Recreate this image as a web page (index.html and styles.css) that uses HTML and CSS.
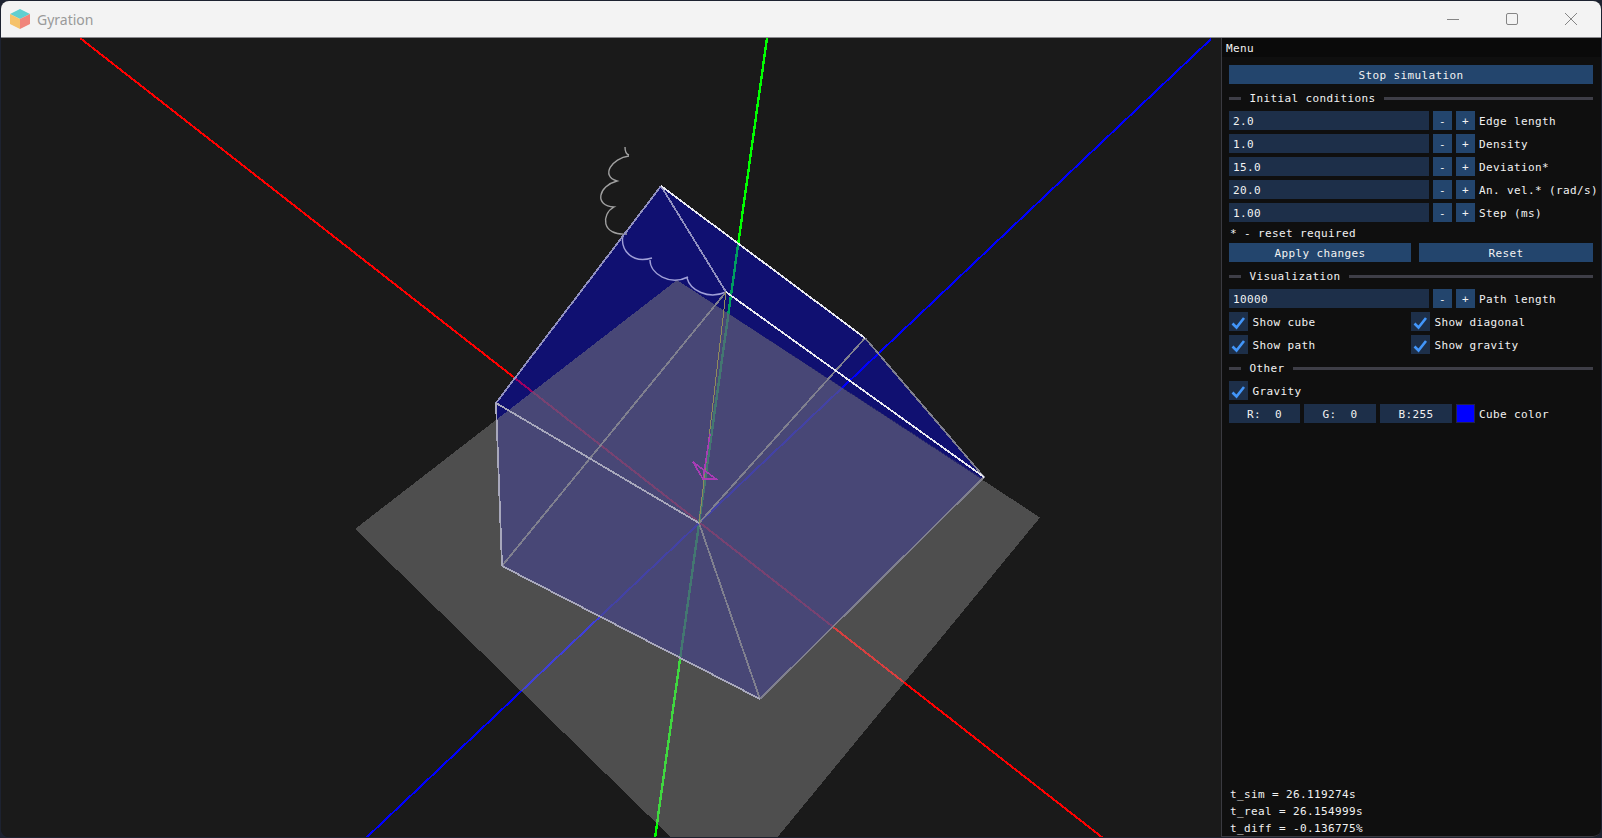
FILE: index.html
```html
<!DOCTYPE html>
<html lang="en">
<head>
<meta charset="utf-8">
<title>Gyration</title>
<link rel="stylesheet" href="styles.css">
</head>
<body>
<div class="window">
  <header class="titlebar">
    <svg class="logo" viewBox="0 0 20 20" width="20" height="20" aria-hidden="true">
      <polygon class="logo-top" points="10,0 20,5 10,10 0,5"/>
      <polygon class="logo-left" points="0,5 10,10 10,20 0,15"/>
      <polygon class="logo-right" points="20,5 10,10 10,20 20,15"/>
    </svg>
    <span class="app-title">Gyration</span>
    <div class="controls">
      <svg class="ctl" viewBox="0 0 14 14" width="14" height="14"><path d="M1 7.5H13"/></svg>
      <svg class="ctl" viewBox="0 0 14 14" width="14" height="14"><rect x="1.5" y="1.5" width="11" height="11" rx="1.5"/></svg>
      <svg class="ctl" viewBox="0 0 14 14" width="14" height="14"><path d="M1 1L13 13M13 1L1 13"/></svg>
    </div>
  </header>
  <div class="main">
    <svg class="scene" width="1220" height="799" viewBox="1 38 1220 799" aria-hidden="true">
      <g class="axes">
        <line class="ax-red" x1="80" y1="38" x2="1103" y2="838"/>
        <line class="ax-green" x1="767" y1="38" x2="655" y2="838"/>
        <line class="ax-blue" x1="1211" y1="39" x2="366" y2="838"/>
      </g>
      <polygon class="cube" points="661,186 865,338 984,477 760,699 502,566 496,403"/>
      <polygon class="floor" points="677,280 1040,517.5 730,895 355,529"/>
      <polygon class="tint" points="677,280 983,479 760,699 502,566 496.5,420"/>
      <path class="trail" d="M625 147Q625 154 629 155M629 156C612 158 600 176 617 181C598 186 594 206 614 207C601 214 601 236 627 234"/>
      <path class="trail inner" d="M623 235C620 250 632 264 652 258M650 260C650 274 670 286 688 277M687 278C690 290 708 300 726 292"/>
      <g class="wire">
        <line class="w-mid" x1="661" y1="186" x2="496" y2="403"/>
        <line class="w-mid" x1="661" y1="186" x2="726" y2="292"/>
        <line class="w-dim" x1="865" y1="338" x2="984" y2="477"/>
        <line class="w-dim" x1="984" y1="477" x2="760" y2="699"/>
        <line class="w-dim" x1="502" y1="566" x2="726" y2="292"/>
        <line class="w-dim" x1="699" y1="523" x2="865" y2="338"/>
        <line class="w-dim" x1="699" y1="523" x2="760" y2="699"/>
        <line class="w-lite" x1="496" y1="403" x2="502" y2="566"/>
        <line class="w-lite" x1="502" y1="566" x2="760" y2="699"/>
        <line class="w-lite" x1="496" y1="403" x2="699" y2="523"/>
        <line class="w-bright" x1="661" y1="186" x2="865" y2="338"/>
        <line class="w-bright" x1="726" y1="292" x2="984" y2="477"/>
      </g>
      <line class="diag" x1="726" y1="292" x2="699" y2="523"/>
      <polyline class="gravity" points="710,434 703,479 716,479 693,462 703,479"/>
    </svg>
    <aside class="panel">
      <div class="menu-title">Menu</div>
      <div class="panel-body">
        <button class="btn wide">Stop simulation</button>
        <div class="sep"><span class="sep-stub"></span><span class="sep-text">Initial conditions</span><span class="sep-line"></span></div>
        <div class="row"><span class="field">2.0</span><span class="btn step">-</span><span class="btn step">+</span><span class="lbl">Edge length</span></div>
        <div class="row"><span class="field">1.0</span><span class="btn step">-</span><span class="btn step">+</span><span class="lbl">Density</span></div>
        <div class="row"><span class="field">15.0</span><span class="btn step">-</span><span class="btn step">+</span><span class="lbl">Deviation*</span></div>
        <div class="row"><span class="field">20.0</span><span class="btn step">-</span><span class="btn step">+</span><span class="lbl">An. vel.* (rad/s)</span></div>
        <div class="row"><span class="field">1.00</span><span class="btn step">-</span><span class="btn step">+</span><span class="lbl">Step (ms)</span></div>
        <div class="note">* - reset required</div>
        <div class="actions"><button class="btn apply">Apply changes</button><button class="btn reset">Reset</button></div>
        <div class="sep"><span class="sep-stub"></span><span class="sep-text">Visualization</span><span class="sep-line"></span></div>
        <div class="row"><span class="field">10000</span><span class="btn step">-</span><span class="btn step">+</span><span class="lbl">Path length</span></div>
        <div class="checks">
          <label class="check"><span class="box"><svg viewBox="0 0 19 19" width="19" height="19"><path d="M3.5 11.5L7.5 15.5L15 6"/></svg></span><span class="lbl">Show cube</span></label>
          <label class="check"><span class="box"><svg viewBox="0 0 19 19" width="19" height="19"><path d="M3.5 11.5L7.5 15.5L15 6"/></svg></span><span class="lbl">Show diagonal</span></label>
          <label class="check"><span class="box"><svg viewBox="0 0 19 19" width="19" height="19"><path d="M3.5 11.5L7.5 15.5L15 6"/></svg></span><span class="lbl">Show path</span></label>
          <label class="check"><span class="box"><svg viewBox="0 0 19 19" width="19" height="19"><path d="M3.5 11.5L7.5 15.5L15 6"/></svg></span><span class="lbl">Show gravity</span></label>
        </div>
        <div class="sep"><span class="sep-stub"></span><span class="sep-text">Other</span><span class="sep-line"></span></div>
        <label class="check"><span class="box"><svg viewBox="0 0 19 19" width="19" height="19"><path d="M3.5 11.5L7.5 15.5L15 6"/></svg></span><span class="lbl">Gravity</span></label>
        <div class="row"><span class="channel">R:  0</span><span class="channel">G:  0</span><span class="channel">B:255</span><span class="swatch"></span><span class="lbl">Cube color</span></div>
      </div>
      <div class="stats">
        <div>t_sim = 26.119274s</div>
        <div>t_real = 26.154999s</div>
        <div>t_diff = -0.136775%</div>
      </div>
    </aside>
  </div>
</div>
</body>
</html>
```
FILE: styles.css
```css
* { box-sizing: border-box; }
html, body { margin: 0; height: 100%; overflow: hidden; }
body { background: #1d2230; padding: 1px; }

.window {
  width: 1600px;
  height: 836px;
  border-radius: 8px;
  overflow: hidden;
  display: flex;
  flex-direction: column;
  background: #1a1a1a;
}

.titlebar {
  height: 37px;
  flex: none;
  display: flex;
  align-items: center;
  background: #f3f3f3;
  border-bottom: 1px solid #8a8a8e;
  padding-left: 9px;
}
.logo { flex: none; }
.logo-top { fill: #5fcfd0; }
.logo-left { fill: #f5c26b; }
.logo-right { fill: #f0857b; }
.app-title {
  margin-left: 7px;
  font: 14px "Noto Sans", "Open Sans", sans-serif;
  color: #9a9a9a;
}
.controls {
  margin-left: auto;
  display: flex;
  gap: 45px;
  padding-right: 23px;
}
.ctl path, .ctl rect { fill: none; stroke: #858585; stroke-width: 1; }

.main { flex: 1; display: flex; min-height: 0; }

.scene { flex: none; display: block; background: #1a1a1a; shape-rendering: crispEdges; }
.axes line { stroke-width: 2; }
.axes .ax-green { stroke-width: 2.4; }
.ax-red { stroke: #ff0000; }
.ax-green { stroke: #00ff00; }
.ax-blue { stroke: #0000ff; }
.cube { fill: rgba(0, 0, 255, .38); }
.floor { fill: rgba(158, 158, 158, .4); }
.tint { fill: rgba(74, 70, 104, .45); }
.trail { fill: none; stroke: #a0a0a0; stroke-width: 1.4; shape-rendering: auto; }
.trail.inner { stroke: #a0a0d8; }
.wire line { stroke-width: 1.8; }
.w-bright { stroke: #e8e8f0; }
.w-lite { stroke: #a8a8bc; }
.w-mid { stroke: #9090c0; }
.w-dim { stroke: #80808f; }
.diag { stroke: #8f8a5c; stroke-width: 1; }
.gravity { fill: none; stroke: #a83cb4; stroke-width: 1.6; }

.panel {
  flex: 1;
  min-width: 0;
  display: flex;
  flex-direction: column;
  background: #0f0f0f;
  border-left: 1px solid #3a3a40;
  border-bottom: 1px solid #3a3a40;
  border-bottom-right-radius: 8px;
  color: #f2f2f2;
  font: 11px/13px "DejaVu Sans Mono", monospace;
  letter-spacing: .38px;
  white-space: nowrap;
}
.menu-title {
  height: 19px;
  flex: none;
  background: #0a0a0a;
  padding: 4px 0 0 4px;
}
.panel-body {
  padding: 8px 8px 0 7px;
  display: flex;
  flex-direction: column;
  gap: 4px;
}
.btn {
  height: 19px;
  border: 0;
  padding: 2px 0 0;
  background: #23456d;
  color: inherit;
  font: inherit;
  letter-spacing: inherit;
  display: flex;
  align-items: center;
  justify-content: center;
}
.wide { width: 364px; flex: none; }
.sep { height: 19px; padding-top: 2px; display: flex; align-items: center; gap: 8px; }
.sep-stub { width: 12px; height: 3px; background: #3e3e47; flex: none; }
.sep-line { flex: 1; height: 3px; background: #3e3e47; }
.sep-text { margin-left: .5px; }

.row { height: 19px; display: flex; gap: 4px; align-items: center; }
.field {
  width: 200px;
  height: 19px;
  flex: none;
  background: #1d2f49;
  padding: 4px 0 0 4px;
}
.step { width: 19px; flex: none; }
.lbl { flex: none; padding-top: 2px; }
.note { height: 13px; margin-left: 1px; padding-top: 1px; }
.actions { display: flex; gap: 8px; }
.apply { width: 182px; }
.reset { width: 174px; }

.checks { display: grid; grid-template-columns: 182px 1fr; gap: 4px 0; }
.check { height: 19px; display: flex; align-items: center; gap: 4.5px; }
.box { width: 19px; height: 19px; background: #1d2f49; display: block; flex: none; }
.box svg { display: block; }
.box path { fill: none; stroke: #4296fa; stroke-width: 2.6; }

.channel {
  width: 72px;
  height: 19px;
  flex: none;
  padding-top: 2px;
  background: #1d2f49;
  white-space: pre;
  display: flex;
  align-items: center;
  justify-content: center;
}
.channel:first-child { width: 71px; }
.swatch {
  width: 19px;
  height: 19px;
  flex: none;
  background: #0000ff;
  border: 1px solid #23234d;
}

.stats {
  margin-top: auto;
  margin-bottom: -1px;
  padding-left: 8px;
  line-height: 17px;
}
```
